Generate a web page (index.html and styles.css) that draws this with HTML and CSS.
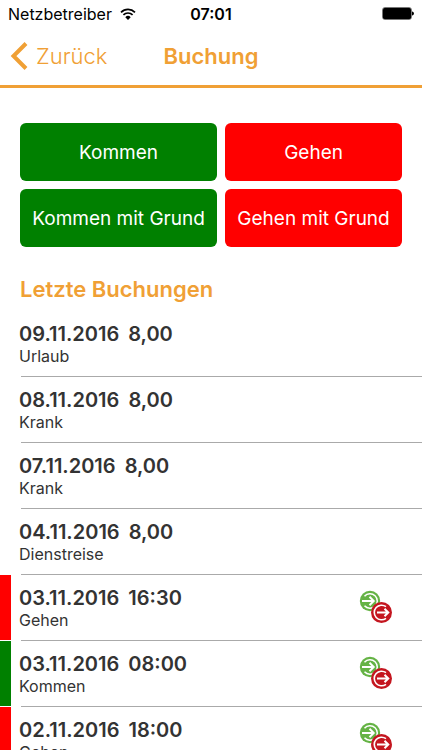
FILE: index.html
```html
<!DOCTYPE html>
<html lang="de">
<head>
    <meta charset="UTF-8">
    <meta name="viewport" content="width=device-width, initial-scale=1.0">
    <title>Buchung</title>
    <link rel="stylesheet" href="styles.css">
</head>
<body>
    <div class="status-bar">
        <div class="carrier">
            <span>Netzbetreiber</span>
            <svg width="16" height="12" viewBox="0 0 16 12">
                <path d="M1 4.300a10 10 0 0 1 14 0M3.400 6.900a6.500 6.500 0 0 1 9.200 0" fill="none" stroke="#000" stroke-width="1.700"/>
                <path d="M8 12L5.300 9.200a3.800 3.800 0 0 1 5.400 0z"/>
            </svg>
        </div>
        <span class="clock">07:01</span>
        <svg class="battery" width="32" height="14" viewBox="0 0 32 14">
            <rect x="0.5" y="0.5" width="29" height="12" rx="2.5" fill="#fff" stroke="#777"/>
            <rect x="1" y="1" width="28" height="11" rx="1.5"/>
            <path d="M30 4.500c2.600.6 2.600 3.400 0 4z"/>
        </svg>
    </div>

    <header class="nav-bar">
        <a class="back" href="#">
            <svg width="18" height="28" viewBox="0 0 18 28">
                <path d="M16 1.500L3.500 14L16 26.500" fill="none" stroke="currentColor" stroke-width="4"/>
            </svg>
            <span>Zurück</span>
        </a>
        <h1>Buchung</h1>
    </header>

    <main>
        <div class="actions">
            <button class="btn come">Kommen</button>
            <button class="btn go">Gehen</button>
            <button class="btn come">Kommen mit Grund</button>
            <button class="btn go">Gehen mit Grund</button>
        </div>

        <h2>Letzte Buchungen</h2>

        <ul class="bookings">
            <li class="booking">
                <div class="entry">
                    <div class="when"><span>09.11.2016</span><span>8,00</span></div>
                    <div class="kind">Urlaub</div>
                </div>
            </li>
            <li class="booking">
                <div class="entry">
                    <div class="when"><span>08.11.2016</span><span>8,00</span></div>
                    <div class="kind">Krank</div>
                </div>
            </li>
            <li class="booking">
                <div class="entry">
                    <div class="when"><span>07.11.2016</span><span>8,00</span></div>
                    <div class="kind">Krank</div>
                </div>
            </li>
            <li class="booking">
                <div class="entry">
                    <div class="when"><span>04.11.2016</span><span>8,00</span></div>
                    <div class="kind">Dienstreise</div>
                </div>
            </li>
            <li class="booking mark-go">
                <div class="entry">
                    <div class="when"><span>03.11.2016</span><span>16:30</span></div>
                    <div class="kind">Gehen</div>
                </div>
                <svg class="swap" width="34" height="34" viewBox="0 0 34 34"><use href="#swap-icon"/></svg>
            </li>
            <li class="booking mark-come">
                <div class="entry">
                    <div class="when"><span>03.11.2016</span><span>08:00</span></div>
                    <div class="kind">Kommen</div>
                </div>
                <svg class="swap" width="34" height="34" viewBox="0 0 34 34"><use href="#swap-icon"/></svg>
            </li>
            <li class="booking mark-go">
                <div class="entry">
                    <div class="when"><span>02.11.2016</span><span>18:00</span></div>
                    <div class="kind">Gehen</div>
                </div>
                <svg class="swap" width="34" height="34" viewBox="0 0 34 34"><use href="#swap-icon"/></svg>
            </li>
        </ul>
    </main>

    <!-- come / go icon shared by the rows -->
    <svg class="defs" width="0" height="0">
        <symbol id="swap-icon" viewBox="0 0 34 34">
            <circle cx="11" cy="11" r="10.2" fill="#65b345"/>
            <path d="M5.500 6.200a7.300 7.300 0 1 1 0 9.600" fill="none" stroke="#fff" stroke-width="1.500"/>
            <path d="M3 11h12M10.500 6.800L14.700 11l-4.200 4.200" fill="none" stroke="#fff" stroke-width="2"/>
            <circle cx="22.500" cy="22.500" r="10.500" fill="#c4161f"/>
            <path d="M27 16.700a7.300 7.300 0 1 0 0 11.600" fill="none" stroke="#fff" stroke-width="1.600"/>
            <path d="M18 22.500h11.500M25.500 18.700l3.800 3.800-3.800 3.800" fill="none" stroke="#fff" stroke-width="2"/>
        </symbol>
    </svg>
</body>
</html>
```

FILE: styles.css
```css
* {
    box-sizing: border-box;
}

body {
    display: flex;
    flex-direction: column;
    height: 100vh;
    margin: 0;
    overflow: hidden;
    background-color: #fff;
    color: #333;
    font-family: Inter, "Liberation Sans", sans-serif;
}

h1, h2, ul {
    margin: 0;
    padding: 0;
}

.status-bar {
    display: grid;
    grid-template-columns: 1fr auto 1fr;
    align-items: center;
    flex-shrink: 0;
    height: 28px;
    padding: 0 8px;
    color: #000;
    font-size: 16px;
}

.carrier {
    display: flex;
    align-items: center;
    gap: 8px;
}

.clock {
    font-weight: 600;
}

.battery {
    justify-self: end;
}

.nav-bar {
    display: grid;
    grid-template-columns: 1fr auto 1fr;
    align-items: center;
    flex-shrink: 0;
    height: 60px;
    padding: 0 10px 2px;
    border-bottom: 3px solid #f0a035;
    color: #f0a035;
}

.back {
    display: flex;
    align-items: center;
    gap: 8px;
    color: inherit;
    font-size: 22px;
    font-weight: 300;
    text-decoration: none;
}

h1 {
    font-size: 22px;
    font-weight: 600;
}

main {
    flex: 1;
    min-height: 0;
    overflow: hidden;
    padding-top: 35px;
}

/* columns grow from their labels, so the left one is wider */
.actions {
    display: grid;
    grid-template-columns: auto auto;
    gap: 8px;
    padding: 0 20px;
}

.btn {
    height: 58px;
    padding: 0;
    border: none;
    border-radius: 6px;
    color: #fff;
    font-family: inherit;
    font-size: 19px;
    cursor: pointer;
}

.come {
    background-color: #008000;
}

.go {
    background-color: #f00;
}

h2 {
    margin: 28px 20px 8px;
    color: #f0a035;
    font-size: 22px;
    font-weight: 600;
    line-height: 28px;
}

.bookings {
    list-style: none;
}

.booking {
    display: flex;
    height: 66px;
    padding-right: 29px;
    background: linear-gradient(#aaa, #aaa) 21px 100% / 100% 1px no-repeat;
}

/* coloured strip at the left edge */
.booking::before {
    content: "";
    width: 11px;
    margin-bottom: 1px;
}

.mark-go::before {
    background-color: #f00;
}

.mark-come::before {
    background-color: #008000;
}

.entry {
    flex: 1;
    padding: 11px 0 0 8px;
}

.when {
    display: flex;
    gap: 9px;
    font-size: 20px;
    font-weight: 600;
    line-height: 24px;
}

.kind {
    font-size: 16px;
    line-height: 20px;
}

.swap {
    margin-top: 15px;
}

.defs {
    position: absolute;
}
```
